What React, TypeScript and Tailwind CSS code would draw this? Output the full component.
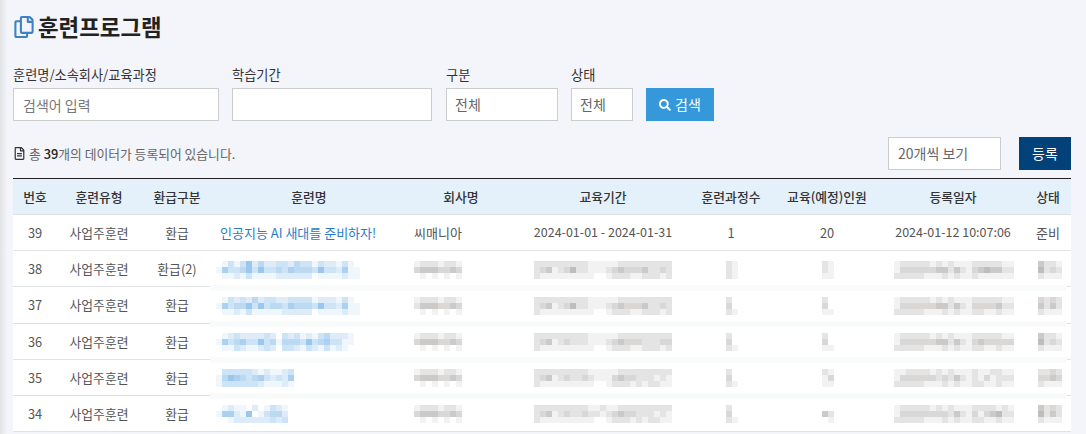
import React from 'react';
import { FaRegCopy, FaRegFileAlt, FaSearch } from 'react-icons/fa';

// blurred cells are 6px mosaic blocks, each digit is one block's strength
function Mosaic({ rows, color, className }: { rows: string[]; color: string; className?: string }) {
  const cols = Math.max(...rows.map(r => r.length));
  return (
    <svg width={cols * 6} height={18} shapeRendering="crispEdges" className={'block ' + (className || '')}>
      {rows.map((row, y) =>
        row.split('').map((d, x) => (
          <rect key={x} x={x * 6} y={y * 6} width={6} height={6} fill={color} opacity={Number(d) * 0.08} />
        ))
      )}
    </svg>
  );
}

const BLUE = '#2f8ad8';
const GRAY = '#5f5a58';

const columns = [
  { label: '번호', width: 44 },
  { label: '훈련유형', width: 84 },
  { label: '환급구분', width: 72 },
  { label: '훈련명', width: 192 },
  { label: '회사명', width: 112 },
  { label: '교육기간', width: 172 },
  { label: '훈련과정수', width: 84 },
  { label: '교육(예정)인원', width: 108 },
  { label: '등록일자', width: 144 },
  { label: '상태', width: 46 },
];

const rows = [
  {
    no: 38, refund: '환급(2)', rowClass: 'h-[36px]', top: 'mt-[3px]',
    name: ['013136242233243313221310', '153346363343544436332511', '011213111122222201111211'],
    company: ['12221221', '34443343', '01010101'],
    period: ['22222222211111222222222', '23412352211123433342232', '21111111110012221122212'],
    course: ['21', '21', '21'],
    people: ['21', '21', '11'],
    date: ['12222212121112222211', '13333334424213454422', '22222111212112111111'],
    state: ['4221', '5232', '2111'],
  },
  {
    no: 37, refund: '환급', rowClass: 'h-[37px]', top: 'mt-[2px]',
    name: ['013232423322333312221310', '153446363443544436332511', '011213111112222201111211'],
    company: ['12221221', '24443343', '01010101'],
    period: ['22222222211111222222222', '23412352211123433342232', '21111111110012221122212'],
    course: ['20', '30', '21'],
    people: ['20', '30', '11'],
    date: ['12222212121112222211', '13333334424213333422', '22222111212112211211'],
    state: ['3232', '4242', '2111'],
  },
  {
    no: 36, refund: '환급', rowClass: 'h-[36px]', top: 'mt-[1px]',
    name: ['01232222320323121342221', '15345336341444363453311', '01132112320332132131210'],
    company: ['12221221', '34443343', '01010101'],
    period: ['22222222211111222222222', '23412322211123433322233', '21111111110012221122212'],
    course: ['20', '30', '21'],
    people: ['20', '30', '11'],
    date: ['12222212121112222211', '13333334424213433333', '22222111212112211211'],
    state: ['4221', '5232', '2111'],
  },
  {
    no: 35, refund: '환급', rowClass: 'h-[36px]', top: 'mt-[1px]',
    name: ['03333321211230', '14654345323250', '13333332111210'],
    company: ['12221221', '34443343', '01010101'],
    period: ['22222222211111222222222', '23412322321113433222121', '21111111110012221212211'],
    course: ['20', '30', '21'],
    people: ['21', '13', '11'],
    date: ['11222212121112112211', '13333332324212131222', '22222111212112211211'],
    state: ['2232', '3343', '2111'],
  },
  {
    no: 34, refund: '환급', rowClass: 'h-[36px]', top: 'mt-[1px]',
    name: ['012110201321', '155216013442', '001222222323'],
    company: ['12221221', '34443343', '01010101'],
    period: ['22222222211211222222222', '23412322322123433222121', '21111111110012221212211'],
    course: ['20', '30', '21'],
    people: ['00', '42', '01'],
    date: ['12222212121112222121', '13333333324213134522', '22222111212112211211'],
    state: ['4232', '5242', '2111'],
  },
];

export default function App() {
  return (
    <div className="relative h-[434px] overflow-hidden bg-[#f3f5fa] pl-[13px] pr-[15px] pt-[10px] text-[13px] text-[#555] font-['Noto_Sans_CJK_KR',sans-serif]">
      <div className="absolute left-0 top-0 h-full w-[7px] bg-gradient-to-r from-[#e2e3e6] to-[#f3f5fa]" />

      <h1 className="relative flex h-[34px] items-center gap-[3px] text-[22.4px] font-bold text-[#222]">
        <FaRegCopy className="text-[22px] text-[#3b82c4]" />
        훈련프로그램
      </h1>

      <div className="mt-[21px] flex items-end">
        <label className="w-[219px]">
          <div className="mb-[3px] text-[13.2px] leading-[20px] text-[#333]">훈련명/소속회사/교육과정</div>
          <input
            placeholder="검색어 입력"
            className="h-[33px] w-[206px] border border-[#ccc] bg-white px-[9px] text-[14px] outline-none placeholder:text-[#777]"
          />
        </label>
        <label className="w-[214px]">
          <div className="mb-[3px] text-[13.2px] leading-[20px] text-[#333]">학습기간</div>
          <input className="h-[33px] w-[200px] border border-[#ccc] bg-white px-[9px] outline-none" />
        </label>
        <label className="w-[125px]">
          <div className="mb-[3px] text-[13.2px] leading-[20px] text-[#333]">구분</div>
          <select className="h-[33px] w-[112px] appearance-none border border-[#ccc] bg-white px-[8px] text-[14px] text-[#666] outline-none">
            <option>전체</option>
          </select>
        </label>
        <label className="w-[75px]">
          <div className="mb-[3px] text-[13.2px] leading-[20px] text-[#333]">상태</div>
          <select className="h-[33px] w-[62px] appearance-none border border-[#ccc] bg-white px-[8px] text-[14px] text-[#666] outline-none">
            <option>전체</option>
          </select>
        </label>
        <button className="flex h-[33px] w-[68px] items-center justify-center gap-[4px] bg-[#3498db] text-[14px] text-white">
          <FaSearch className="text-[12px]" />
          검색
        </button>
      </div>

      <div className="mt-[16px] flex h-[33px] items-center justify-between">
        <div className="flex items-center gap-[3px] text-[12.8px] text-[#666]">
          <FaRegFileAlt className="text-[13px] text-[#333]" />
          <span>
            총 <b className="font-medium text-[#222]">39</b>개의 데이터가 등록되어 있습니다.
          </span>
        </div>
        <div className="flex items-center gap-[18px]">
          <select className="h-[33px] w-[113px] appearance-none border border-[#ccc] bg-white px-[9px] text-[14px] text-[#666] outline-none">
            <option>20개씩 보기</option>
          </select>
          <button className="h-[33px] w-[52px] bg-[#024279] text-[14px] text-white">등록</button>
        </div>
      </div>

      <div className="relative mt-[8px]">
        <table className="w-[1058px] table-fixed border-separate border-spacing-0 bg-white text-[12.8px]">
          <colgroup>
            {columns.map(c => (
              <col key={c.label} style={{ width: c.width }} />
            ))}
          </colgroup>
          <thead>
            <tr className="h-[37px] bg-[#e4f1fb] text-[#333]">
              {columns.map(c => (
                <th key={c.label} className="border-t border-b border-t-[#222] border-b-[#dde2ea] p-0 text-center font-medium">
                  {c.label}
                </th>
              ))}
            </tr>
          </thead>
          <tbody>
            <tr className="h-[36px] text-center [&>td]:border-b [&>td]:border-[#e0e2e8] [&>td]:p-0">
              <td>39</td>
              <td>사업주훈련</td>
              <td>환급</td>
              <td className="text-left text-[13px] text-[#2a7cc7]"><div className="pl-[7px]">인공지능 AI 새대를 준비하자!</div></td>
              <td className="text-left text-[13px]"><div className="pl-[9px]">씨매니아</div></td>
              <td className="text-[12.5px]">2024-01-01 - 2024-01-31</td>
              <td>1</td>
              <td>20</td>
              <td className="text-[12.5px]">2024-01-12 10:07:06</td>
              <td className="text-[13px]">준비</td>
            </tr>
            {rows.map(r => (
              <tr key={r.no} className={r.rowClass + ' text-center [&>td]:border-b [&>td]:border-[#e0e2e8] [&>td]:p-0'}>
                <td>{r.no}</td>
                <td>사업주훈련</td>
                <td>{r.refund}</td>
                <td><Mosaic rows={r.name} color={BLUE} className={r.top + ' ml-[3px]'} /></td>
                <td><Mosaic rows={r.company} color={GRAY} className={r.top + ' ml-[9px]'} /></td>
                <td><Mosaic rows={r.period} color={GRAY} className={r.top + ' ml-[17px]'} /></td>
                <td><Mosaic rows={r.course} color={GRAY} className={r.top + ' ml-[37px]'} /></td>
                <td><Mosaic rows={r.people} color={GRAY} className={r.top + ' ml-[49px]'} /></td>
                <td><Mosaic rows={r.date} color={GRAY} className={r.top + ' ml-[13px]'} /></td>
                <td><Mosaic rows={r.state} color={GRAY} className={r.top + ' ml-[13px]'} /></td>
              </tr>
            ))}
          </tbody>
        </table>
        {/* pale mosaic bands lying over the row lines */}
        {[107, 143, 179, 215].map(top => (
          <div key={top} className="absolute left-[197px] h-[6px] w-[857px] bg-[#f9fafa]" style={{ top }} />
        ))}
      </div>
    </div>
  );
}
